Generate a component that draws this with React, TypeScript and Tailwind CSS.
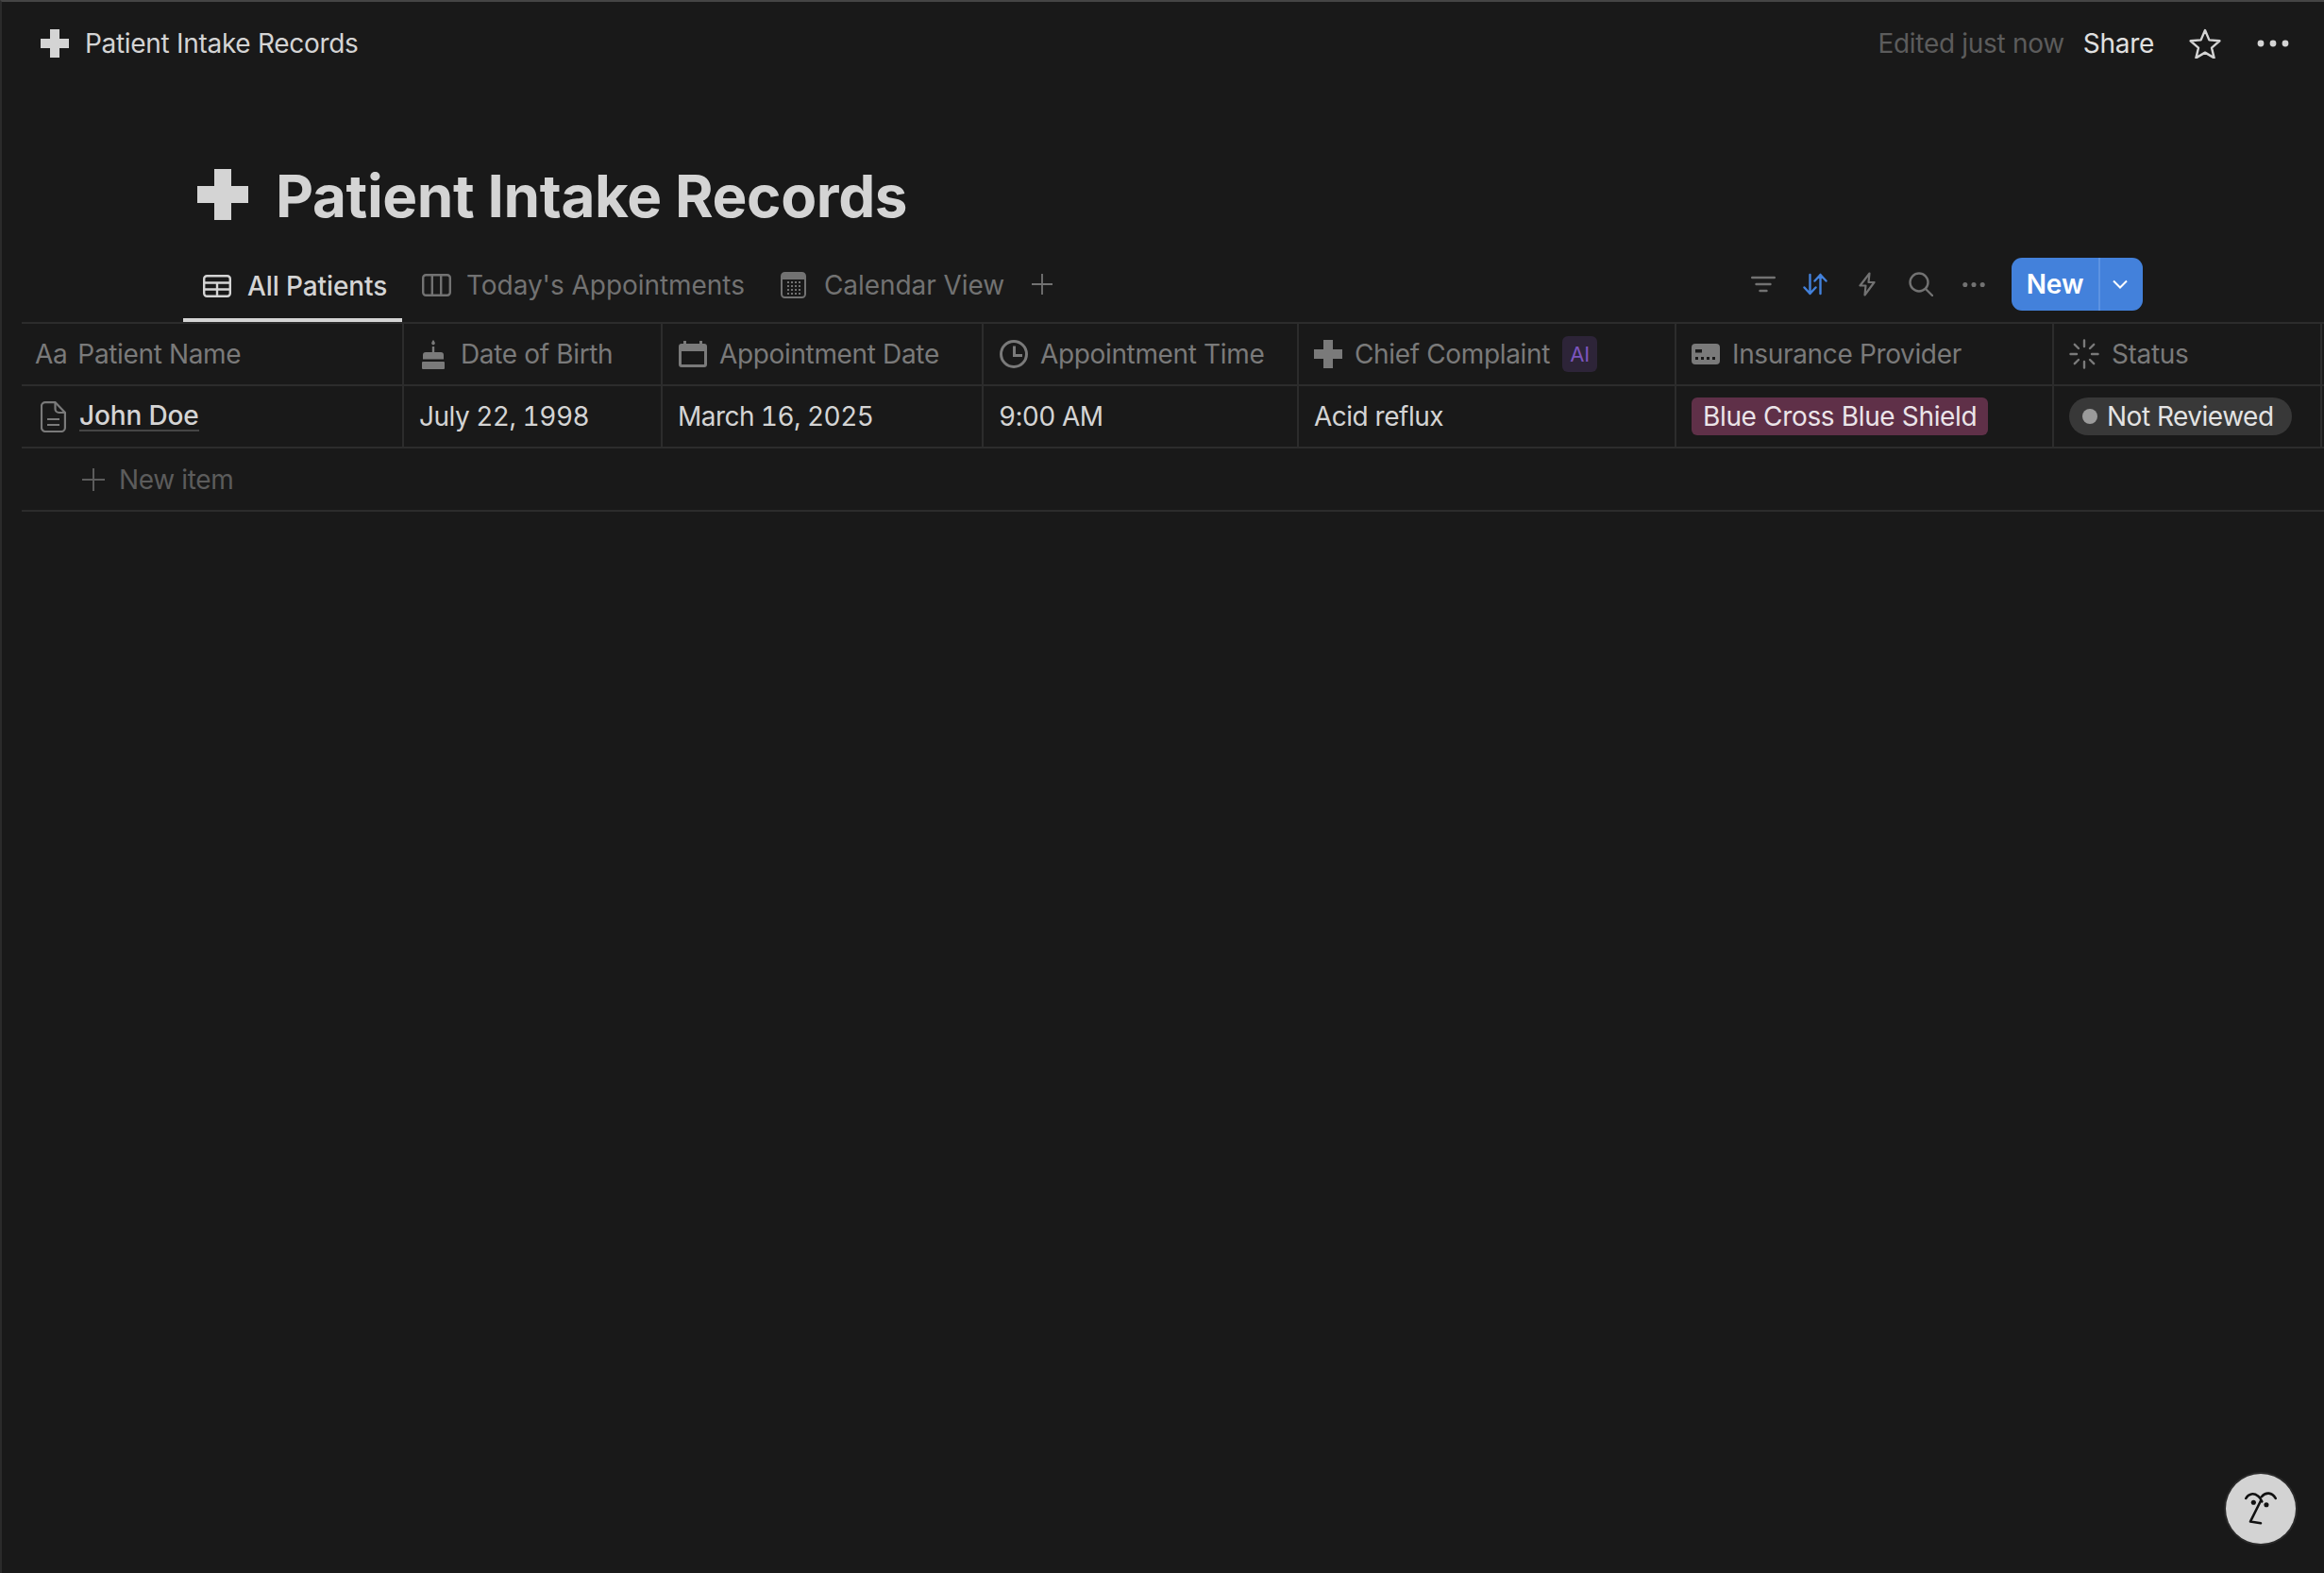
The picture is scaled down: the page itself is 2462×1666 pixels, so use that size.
import React from "react";

const Cross = ({ className }: { className: string }) => (
  <svg viewBox="0 0 30 30" className={className} fill="currentColor">
    <path d="M10 0h10v10h10v10H20v10H10V20H0V10h10z" />
  </svg>
);

const TableIcon = () => (
  <svg viewBox="0 0 30 24" className="w-[30px] h-[24px] shrink-0" fill="none" stroke="currentColor" strokeWidth="2.4">
    <rect x="1.2" y="1.2" width="27.6" height="21.6" rx="3" />
    <path d="M1.2 8.5h27.6M1.2 15.5h27.6M15 8.5v14.3" />
  </svg>
);

const BoardIcon = () => (
  <svg viewBox="0 0 31 24" className="w-[31px] h-[24px] shrink-0" fill="none" stroke="currentColor" strokeWidth="2.4">
    <rect x="1.2" y="1.2" width="28.6" height="21.6" rx="3" />
    <path d="M10.8 1.2v21.6M20.2 1.2v21.6" />
  </svg>
);

const CalGrid = () => (
  <svg viewBox="0 0 27 28" className="w-[27px] h-[28px] shrink-0">
    <rect x="1" y="1" width="25" height="26" rx="3.5" fill="none" stroke="currentColor" strokeWidth="2" />
    <path d="M1 4.5a3.5 3.5 0 0 1 3.5-3.5h18a3.5 3.5 0 0 1 3.5 3.5V8H1z" fill="currentColor" />
    <g fill="currentColor">
      {[11, 15, 19, 23].map((y) =>
        [7, 11, 15, 19].map((x) => <rect key={`${x}-${y}`} x={x} y={y - 1} width="2" height="2" />)
      )}
    </g>
  </svg>
);

const Cake = () => (
  <svg viewBox="0 0 24 31" className="w-[24px] h-[31px] shrink-0" fill="currentColor">
    <path d="M12 0c1.2 1.6 1.8 2.7 1.8 3.6a1.8 1.8 0 0 1-3.6 0C10.200 2.700 10.800 1.600 12 0z" />
    <rect x="10.800" y="7" width="2.400" height="6" />
    <path d="M4 13h16a3 3 0 0 1 3 3v4.500H1V16a3 3 0 0 1 3-3z" />
    <rect x="0" y="23" width="24" height="8" rx="1" />
  </svg>
);

const Calendar = () => (
  <svg viewBox="0 0 30 28" className="w-[30px] h-[28px] shrink-0" fill="currentColor">
    <path d="M5 0h3v3h14V0h3v3h2a3 3 0 0 1 3 3v19a3 3 0 0 1-3 3H3a3 3 0 0 1-3-3V6a3 3 0 0 1 3-3h2zM3 11v14h24V11z" fillRule="evenodd" />
  </svg>
);

const Clock = () => (
  <svg viewBox="0 0 30 30" className="w-[30px] h-[30px] shrink-0" fill="none" stroke="currentColor" strokeWidth="3">
    <circle cx="15" cy="15" r="13.500" />
    <path d="M15.500 6.500V16.500H24" strokeWidth="3" />
  </svg>
);

const Card = () => (
  <svg viewBox="0 0 30 22" className="w-[30px] h-[22px] shrink-0">
    <rect width="30" height="22" rx="4" fill="currentColor" />
    <g fill="#191919">
      <rect x="4" y="6" width="7" height="3.500" />
      <rect x="4" y="14" width="3" height="3" />
      <rect x="10" y="14" width="3" height="3" />
      <rect x="16" y="14" width="3" height="3" />
      <rect x="22" y="14" width="3" height="3" />
    </g>
  </svg>
);

const Spinner = () => (
  <svg viewBox="0 0 32 32" className="w-[32px] h-[32px] shrink-0" fill="none" stroke="currentColor" strokeWidth="2.400" strokeLinecap="round">
    <path d="M16 1.500v6.500M16 24v6.500M1.500 16H8M24 16h6.500M5.800 5.800l4.200 4.200M22 22l4.200 4.200M5.800 26.200 10 22M22 10l4.200-4.200" />
  </svg>
);

const Doc = () => (
  <svg viewBox="0 0 27 33" className="w-[27px] h-[33px] shrink-0" fill="none" stroke="currentColor" strokeWidth="2.200">
    <path d="M5 1.100h10.500L25.900 12v16a4 4 0 0 1-4 4H5a4 4 0 0 1-4-4V5a4 4 0 0 1 4-3.900z" />
    <path d="M15.500 1.100V8a4 4 0 0 0 4 4h6.400M7 19h13M7 25h13" />
  </svg>
);

const Plus = ({ className }: { className: string }) => (
  <svg viewBox="0 0 24 24" className={className} fill="none" stroke="currentColor" strokeWidth="2">
    <path d="M12 0v24M0 12h24" />
  </svg>
);

const Dots = ({ className, r }: { className: string; r: number }) => (
  <svg viewBox="0 0 34 8" className={className} fill="currentColor">
    <circle cx="4" cy="4" r={r} />
    <circle cx="17" cy="4" r={r} />
    <circle cx="30" cy="4" r={r} />
  </svg>
);

const Star = () => (
  <svg viewBox="0 0 34 32" className="w-[34px] h-[32px] shrink-0" fill="none" stroke="currentColor" strokeWidth="2.400" strokeLinejoin="round">
    <path d="M17 2l4.400 10.400 11 .9-8.400 7.300 2.600 10.800L17 25.600l-9.600 5.800L10 20.600 1.600 13.300l11-.9z" />
  </svg>
);

const Filter = () => (
  <svg viewBox="0 0 26 18" className="w-[26px] h-[18px]" fill="none" stroke="currentColor" strokeWidth="2.400" strokeLinecap="round">
    <path d="M1.200 2h23.600M5.500 9h15M9.500 16h7" />
  </svg>
);

const Sort = () => (
  <svg viewBox="0 0 26 24" className="w-[26px] h-[24px]" fill="none" stroke="currentColor" strokeWidth="2.400" strokeLinecap="round" strokeLinejoin="round">
    <path d="M7.500 2v20M1.500 15.500l6 6.500 6-6.500M18.500 22V2M12.500 8.500l6-6.500 6 6.500" />
  </svg>
);

const Bolt = () => (
  <svg viewBox="0 0 18 26" className="w-[18px] h-[26px]" fill="none" stroke="currentColor" strokeWidth="2.200" strokeLinejoin="round">
    <path d="M11.500 1.500 1.500 14.500h6l-1 10 10-13.500h-6z" />
  </svg>
);

const Search = () => (
  <svg viewBox="0 0 26 26" className="w-[26px] h-[26px]" fill="none" stroke="currentColor" strokeWidth="2.400" strokeLinecap="round">
    <circle cx="11" cy="11" r="9.500" />
    <path d="M18 18l7 7" />
  </svg>
);

const Chevron = () => (
  <svg viewBox="0 0 16 10" className="w-[16px] h-[10px]" fill="none" stroke="currentColor" strokeWidth="2">
    <path d="M1 1.500l7 7 7-7" />
  </svg>
);

const Face = () => (
  <svg viewBox="0 0 40 44" className="w-[34px] h-[38px]" fill="none" stroke="#111" strokeWidth="3" strokeLinecap="round" strokeLinejoin="round">
    <path d="M1.500 9c3-6 10-7 15-3 3 2 4 5 5 7M21 7c5-6 13-6 17.500 2" />
    <path d="M20 12 7 38l13 2" />
    <circle cx="11" cy="14" r="3" fill="#111" stroke="none" />
    <circle cx="27" cy="17" r="3" fill="#111" stroke="none" />
  </svg>
);

const Head = ({ icon, label, pl, gap = "ml-[13px]" }: { icon: React.ReactNode; label: string; pl: string; gap?: string }) => (
  <div className={`flex items-center border-r-2 border-[#2c2c2c] ${pl}`}>
    {icon}
    <span className={`${gap} whitespace-nowrap`}>{label}</span>
  </div>
);

export default function App() {
  return (
    <div
      className="relative h-[1666px] w-full overflow-hidden border-t-2 border-l-2 border-t-[#454545] border-l-[#2b2b2b] bg-[#191919] text-[28px] leading-[34px] text-[#d4d4d4]"
      style={{ fontFamily: '"Inter", "Liberation Sans", sans-serif' }}
    >
      <header className="flex h-[88px] items-center pl-[41px] pr-[37px] tracking-[-0.3px]">
        <Cross className="h-[30px] w-[30px] shrink-0 text-[#d4d4d4]" />
        <span className="ml-[17px]">Patient Intake Records</span>
        <span className="ml-auto text-[#5c5c5c]">Edited just now</span>
        <span className="ml-[20px] text-[#e0e0e0]">Share</span>
        <span className="ml-[37px] text-[#d4d4d4]"><Star /></span>
        <Dots className="ml-[38px] h-[8px] w-[34px] text-[#d4d4d4]" r={3.400} />
      </header>

      <div className="flex h-[179px] items-start pl-[207px] pt-[89px]">
        <Cross className="h-[54px] w-[54px] shrink-0 text-[#d4d4d4]" />
        <h1 className="ml-[29px] mt-[2px] text-[62px] font-bold leading-[54px] tracking-[-0.4px]">Patient Intake Records</h1>
      </div>

      <div className="flex h-[72px] items-stretch pl-[192px] tracking-[-0.05px] text-[#727272]">
        <div className="flex w-[232px] items-center border-b-4 border-[#d4d4d4] pb-[1px] pl-[21px] text-[#d4d4d4]">
          <TableIcon />
          <span className="ml-[17px] font-medium tracking-[-0.1px]">All Patients</span>
        </div>
        <div className="ml-[21px] flex items-center pb-[6px]">
          <BoardIcon />
          <span className="ml-[16px]">Today's Appointments</span>
        </div>
        <div className="ml-[38px] flex items-center pb-[6px]">
          <CalGrid />
          <span className="ml-[19px]">Calendar View</span>
        </div>
        <div className="ml-[29px] flex items-center pb-[8px]">
          <Plus className="h-[22px] w-[22px]" />
        </div>
        <div className="ml-auto mr-[192px] flex items-center pb-[8px]">
          <Filter />
          <span className="ml-[29px] text-[#4381db]"><Sort /></span>
          <span className="ml-[33px]"><Bolt /></span>
          <span className="ml-[35px]"><Search /></span>
          <Dots className="ml-[31px] h-[7px] w-[24px] text-[#727272]" r={3.600} />
          <div className="ml-[28px] flex h-[56px] w-[139px] items-center rounded-[11px] bg-[#4381db] text-white">
            <span className="w-[92px] text-center font-semibold">New</span>
            <span className="h-full w-[2px] bg-[#5d93e2]" />
            <span className="flex flex-1 items-center justify-center pr-[3px]"><Chevron /></span>
          </div>
        </div>
      </div>

      <div className="ml-[21px] tracking-[-0.35px]">
        <div className="grid h-[68px] grid-cols-[405px_274px_340px_334px_400px_400px_284px] items-stretch border-y-2 border-[#2c2c2c] text-[#7a7a7a]">
          <div className="flex items-center border-r-2 border-[#2c2c2c] pl-[14px]">
            <span>Aa</span>
            <span className="ml-[11px]">Patient Name</span>
          </div>
          <Head icon={<Cake />} label="Date of Birth" pl="pl-[19px]" gap="ml-[17px]" />
          <Head icon={<Calendar />} label="Appointment Date" pl="pl-[17px]" />
          <Head icon={<Clock />} label="Appointment Time" pl="pl-[17px]" />
          <div className="flex items-center border-r-2 border-[#2c2c2c] pl-[16px]">
            <Cross className="h-[30px] w-[30px] shrink-0" />
            <span className="ml-[13px]">Chief Complaint</span>
            <span className="ml-[13px] flex h-[38px] w-[37px] items-center justify-center rounded-[6px] bg-[#2d2438] text-[22px] text-[#7c55bd]">AI</span>
          </div>
          <Head icon={<Card />} label="Insurance Provider" pl="pl-[16px]" />
          <Head icon={<Spinner />} label="Status" pl="pl-[16px]" />
        </div>

        <div className="grid h-[66px] grid-cols-[405px_274px_340px_334px_400px_400px_284px] items-stretch border-b-2 border-[#2c2c2c]">
          <div className="flex items-center border-r-2 border-[#2c2c2c] pl-[20px]">
            <span className="text-[#7a7a7a]"><Doc /></span>
            <span className="ml-[14px] border-b-2 border-[#454545] font-medium leading-[30px] tracking-[-0.15px]">John Doe</span>
          </div>
          <div className="flex items-center border-r-2 border-[#2c2c2c] pl-[16px] tabular-nums tracking-[-0.5px]">July 22, 1998</div>
          <div className="flex items-center border-r-2 border-[#2c2c2c] pl-[16px] tabular-nums tracking-[-0.55px]">March 16, 2025</div>
          <div className="flex items-center border-r-2 border-[#2c2c2c] pl-[16px] tabular-nums tracking-[-0.5px]">9:00 AM</div>
          <div className="flex items-center border-r-2 border-[#2c2c2c] pl-[16px] tracking-[-0.5px]">Acid reflux</div>
          <div className="flex items-center border-r-2 border-[#2c2c2c] pl-[16px]">
            <span className="flex h-[40px] items-center whitespace-nowrap rounded-[6px] bg-[#5f3048] px-[12px] text-[#ebe4e8]">Blue Cross Blue Shield</span>
          </div>
          <div className="flex items-center border-r-2 border-[#2c2c2c] pl-[16px]">
            <span className="flex h-[40px] w-[236px] items-center whitespace-nowrap rounded-full bg-[#383838] pl-[14px] text-[#e3e3e3]">
              <span className="h-[16px] w-[16px] rounded-full bg-[#9b9b9b]" />
              <span className="ml-[10px] tracking-[-0.5px]">Not Reviewed</span>
            </span>
          </div>
        </div>

        <div className="flex h-[67px] items-center border-b-2 border-[#2c2c2c] pl-[64px] text-[#5c5c5c]">
          <Plus className="h-[24px] w-[24px]" />
          <span className="ml-[15px]">New item</span>
        </div>
      </div>

      <div className="absolute bottom-[31px] right-[30px] flex h-[74px] w-[74px] items-center justify-center rounded-full bg-[#d3d3d3] shadow-[0_0_0_2px_#2a2a2a]">
        <Face />
      </div>
    </div>
  );
}
